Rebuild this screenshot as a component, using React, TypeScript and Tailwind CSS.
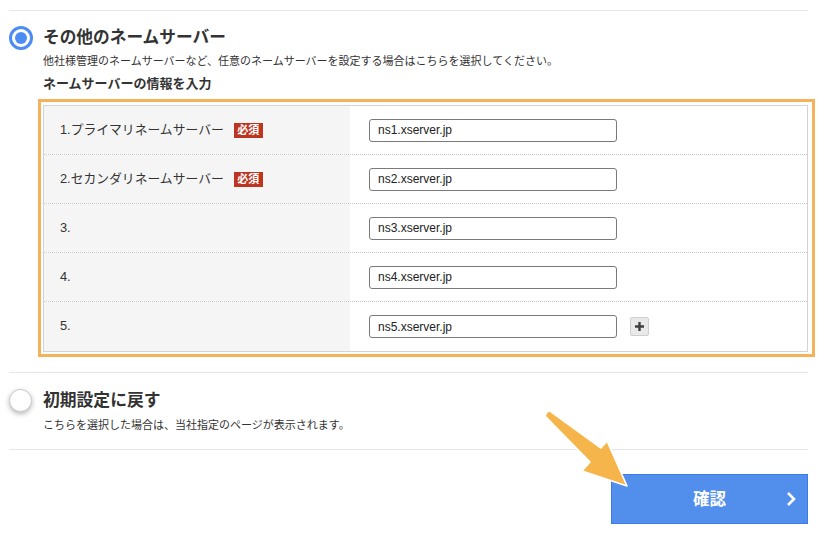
import React from "react";

const FONT = { fontFamily: '"Liberation Sans", "Noto Sans CJK JP", sans-serif' };

function RadioOn() {
  return (
    <div className="w-[24px] h-[24px] rounded-full border-[3px] border-[#4d8cf5] bg-white flex items-center justify-center shrink-0">
      <div className="w-[12px] h-[12px] rounded-full bg-[#4d8cf5]" />
    </div>
  );
}

function RadioOff() {
  return (
    <div className="w-[23px] h-[23px] rounded-full border border-[#c9c9c9] bg-white shrink-0 shadow-[0_2px_5px_rgba(0,0,0,0.28)]" />
  );
}

function Badge() {
  return (
    <span className="ml-[10px] inline-flex items-center justify-center w-[29px] h-[15px] bg-[#bd3421] text-white text-[11px] font-bold leading-none">
      必須
    </span>
  );
}

const rows = [
  { label: "1.プライマリネームサーバー", req: true, value: "ns1.xserver.jp" },
  { label: "2.セカンダリネームサーバー", req: true, value: "ns2.xserver.jp" },
  { label: "3.", req: false, value: "ns3.xserver.jp" },
  { label: "4.", req: false, value: "ns4.xserver.jp" },
  { label: "5.", req: false, value: "ns5.xserver.jp", plus: true },
];

export default function App() {
  return (
    <div className="relative w-[821px] h-[541px] overflow-hidden bg-white text-[#333]" style={FONT}>
      <div className="pl-[9px] pr-[13px] pt-[10px]">
        {/* Section 1 */}
        <div className="border-t border-[#e6e6e6] pt-[15px] pb-[20px]">
          <div className="flex items-center gap-[10px]">
            <RadioOn />
            <h2 className="text-[16.7px] font-bold leading-[22px] text-[#333]">その他のネームサーバー</h2>
          </div>
          <div className="pl-[34px]">
            <p className="mt-[3px] text-[11px] leading-[16px]">
              他社様管理のネームサーバーなど、任意のネームサーバーを設定する場合はこちらを選択してください。
            </p>
            <p className="mt-[6px] text-[13px] font-bold leading-[18px]">ネームサーバーの情報を入力</p>
            <div className="relative mt-[12px]">
              <div className="border border-[#d4d4d4]">
                {rows.map((r, i) => (
                  <div
                    key={i}
                    className={
                      "flex h-[49px] " +
                      (i < rows.length - 1 ? "border-b border-dotted border-[#c8c8c8]" : "")
                    }
                  >
                    <div className="w-[306px] bg-[#f5f5f5] pl-[16px] flex items-center text-[12.8px] leading-none">
                      <span>{r.label}</span>
                      {r.req && <Badge />}
                    </div>
                    <div className="flex-1 flex items-center pl-[19px]">
                      <div className="w-[248px] h-[23px] border border-[#7a7a7a] rounded-[3px] bg-white flex items-center pl-[8px] text-[12px] text-[#222]">
                        {r.value}
                      </div>
                      {r.plus && (
                        <div className="ml-[13px] w-[19px] h-[19px] rounded-[2px] border border-[#cfcfcf] bg-[#e9e9e9] flex items-center justify-center">
                          <svg width="11" height="11" viewBox="0 0 11 11">
                            <path d="M5.5 1v9M1 5.5h9" stroke="#3f3f3f" strokeWidth="2.4" />
                          </svg>
                        </div>
                      )}
                    </div>
                  </div>
                ))}
              </div>
              <div className="pointer-events-none absolute -left-[5px] -right-[7px] -top-[6px] -bottom-[5px] border-[3px] border-[#f5b25a]" />
            </div>
          </div>
        </div>

        {/* Section 2 */}
        <div className="border-t border-[#e6e6e6] pt-[15px] pb-[16px]">
          <div className="flex items-center gap-[11px]">
            <RadioOff />
            <h2 className="text-[16.8px] font-bold leading-[22px] text-[#333] mt-[2px]">初期設定に戻す</h2>
          </div>
          <p className="pl-[34px] mt-[5px] text-[11px] leading-[16px]">
            こちらを選択した場合は、当社指定のページが表示されます。
          </p>
        </div>

        <div className="border-t border-[#e6e6e6] flex justify-end pt-[24px]">
          <button className="relative w-[197px] h-[50px] bg-[#528eec] border border-[#3b7ce8] text-white text-[16.5px] font-bold flex items-center justify-center">
            確認
            <svg className="absolute right-[11px] top-1/2 -translate-y-1/2" width="10" height="16" viewBox="0 0 10 16">
              <path d="M2 2l6 6-6 6" fill="none" stroke="white" strokeWidth="2.6" />
            </svg>
          </button>
        </div>
      </div>

      {/* annotation arrow */}
      <svg className="absolute left-[540px] top-[405px]" width="95" height="90" viewBox="0 0 95 90">
        <polygon
          points="5,11 7,7 10,6 61,43 67,36 87,81 42,66 50,57"
          fill="#f5b54a"
          stroke="white"
          strokeWidth="1.6"
          strokeLinejoin="round"
        />
      </svg>
    </div>
  );
}
